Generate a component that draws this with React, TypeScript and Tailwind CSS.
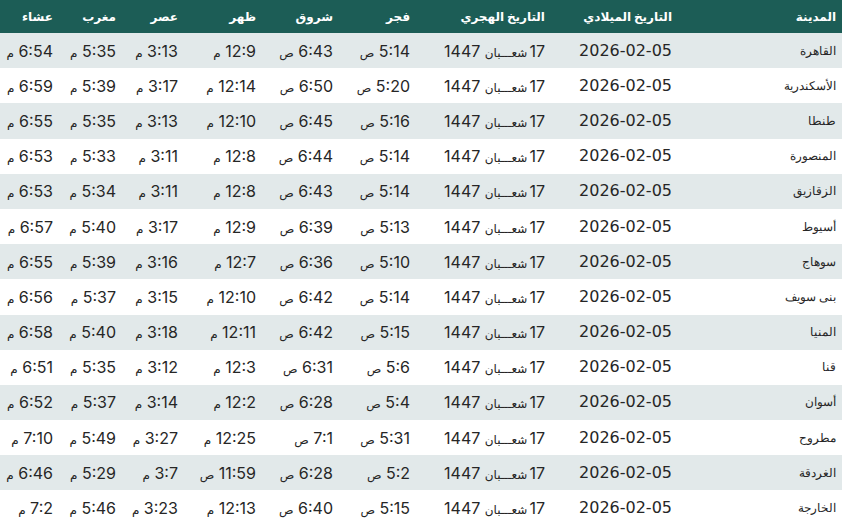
const rows: string[][] = [
  ["القاهرة", "5:14 ص", "6:43 ص", "12:9 م", "3:13 م", "5:35 م", "6:54 م"],
  ["الأسكندرية", "5:20 ص", "6:50 ص", "12:14 م", "3:17 م", "5:39 م", "6:59 م"],
  ["طنطا", "5:16 ص", "6:45 ص", "12:10 م", "3:13 م", "5:35 م", "6:55 م"],
  ["المنصورة", "5:14 ص", "6:44 ص", "12:8 م", "3:11 م", "5:33 م", "6:53 م"],
  ["الزقازيق", "5:14 ص", "6:43 ص", "12:8 م", "3:11 م", "5:34 م", "6:53 م"],
  ["أسيوط", "5:13 ص", "6:39 ص", "12:9 م", "3:17 م", "5:40 م", "6:57 م"],
  ["سوهاج", "5:10 ص", "6:36 ص", "12:7 م", "3:16 م", "5:39 م", "6:55 م"],
  ["بنى سويف", "5:14 ص", "6:42 ص", "12:10 م", "3:15 م", "5:37 م", "6:56 م"],
  ["المنيا", "5:15 ص", "6:42 ص", "12:11 م", "3:18 م", "5:40 م", "6:58 م"],
  ["قنا", "5:6 ص", "6:31 ص", "12:3 م", "3:12 م", "5:35 م", "6:51 م"],
  ["أسوان", "5:4 ص", "6:28 ص", "12:2 م", "3:14 م", "5:37 م", "6:52 م"],
  ["مطروح", "5:31 ص", "7:1 ص", "12:25 م", "3:27 م", "5:49 م", "7:10 م"],
  ["الغردقة", "5:2 ص", "6:28 ص", "11:59 ص", "3:7 م", "5:29 م", "6:46 م"],
  ["الخارجة", "5:15 ص", "6:40 ص", "12:13 م", "3:23 م", "5:46 م", "7:2 م"],
];

const headers = [
  "المدينة",
  "التاريخ الميلادي",
  "التاريخ الهجري",
  "فجر",
  "شروق",
  "ظهر",
  "عصر",
  "مغرب",
  "عشاء",
];

function Time({ value }: { value: string }) {
  const [t, s] = value.split(" ");
  return (
    <>
      <span className="text-[16px]">{t}</span>{" "}
      <span className="text-[12px]">{s}</span>
    </>
  );
}

export default function App() {
  return (
    <div
      dir="rtl"
      className="w-[842px] h-[525px] overflow-hidden bg-white text-[#262626]"
      style={{ fontFamily: 'Inter, "DejaVu Sans", sans-serif' }}
    >
      <table className="w-[842px] table-fixed border-collapse">
        <colgroup>
          <col className="w-[164px]" />
          <col className="w-[127px]" />
          <col className="w-[135px]" />
          <col className="w-[77px]" />
          <col className="w-[77px]" />
          <col className="w-[78px]" />
          <col className="w-[62px]" />
          <col className="w-[63px]" />
          <col className="w-[59px]" />
        </colgroup>
        <thead>
          <tr className="h-[33px] bg-[#1c5d56] text-white">
            {headers.map((h) => (
              <th
                key={h}
                className="px-[6px] text-right text-[12px] font-bold whitespace-nowrap"
              >
                {h}
              </th>
            ))}
          </tr>
        </thead>
        <tbody>
          {rows.map((r, i) => (
            <tr
              key={r[0]}
              className={`h-[35.2px] ${i % 2 === 0 ? "bg-[#e2e9ea]" : "bg-white"}`}
            >
              <td className="px-[6px] text-right text-[12px] font-light whitespace-nowrap">
                {r[0]}
              </td>
              <td
                className="px-[6px] text-right text-[16px] whitespace-nowrap"
                style={{ fontFamily: '"DejaVu Sans", sans-serif' }}
              >
                2026-02-05
              </td>
              <td className="px-[6px] text-right whitespace-nowrap">
                <span className="text-[16px]">17</span>
                <span className="text-[12px]">&#8239;شعـــبان</span>{" "}
                <span className="text-[16px]">1447</span>
              </td>
              {r.slice(1).map((t, j) => (
                <td key={j} className="px-[6px] text-right whitespace-nowrap">
                  <Time value={t} />
                </td>
              ))}
            </tr>
          ))}
        </tbody>
      </table>
    </div>
  );
}
